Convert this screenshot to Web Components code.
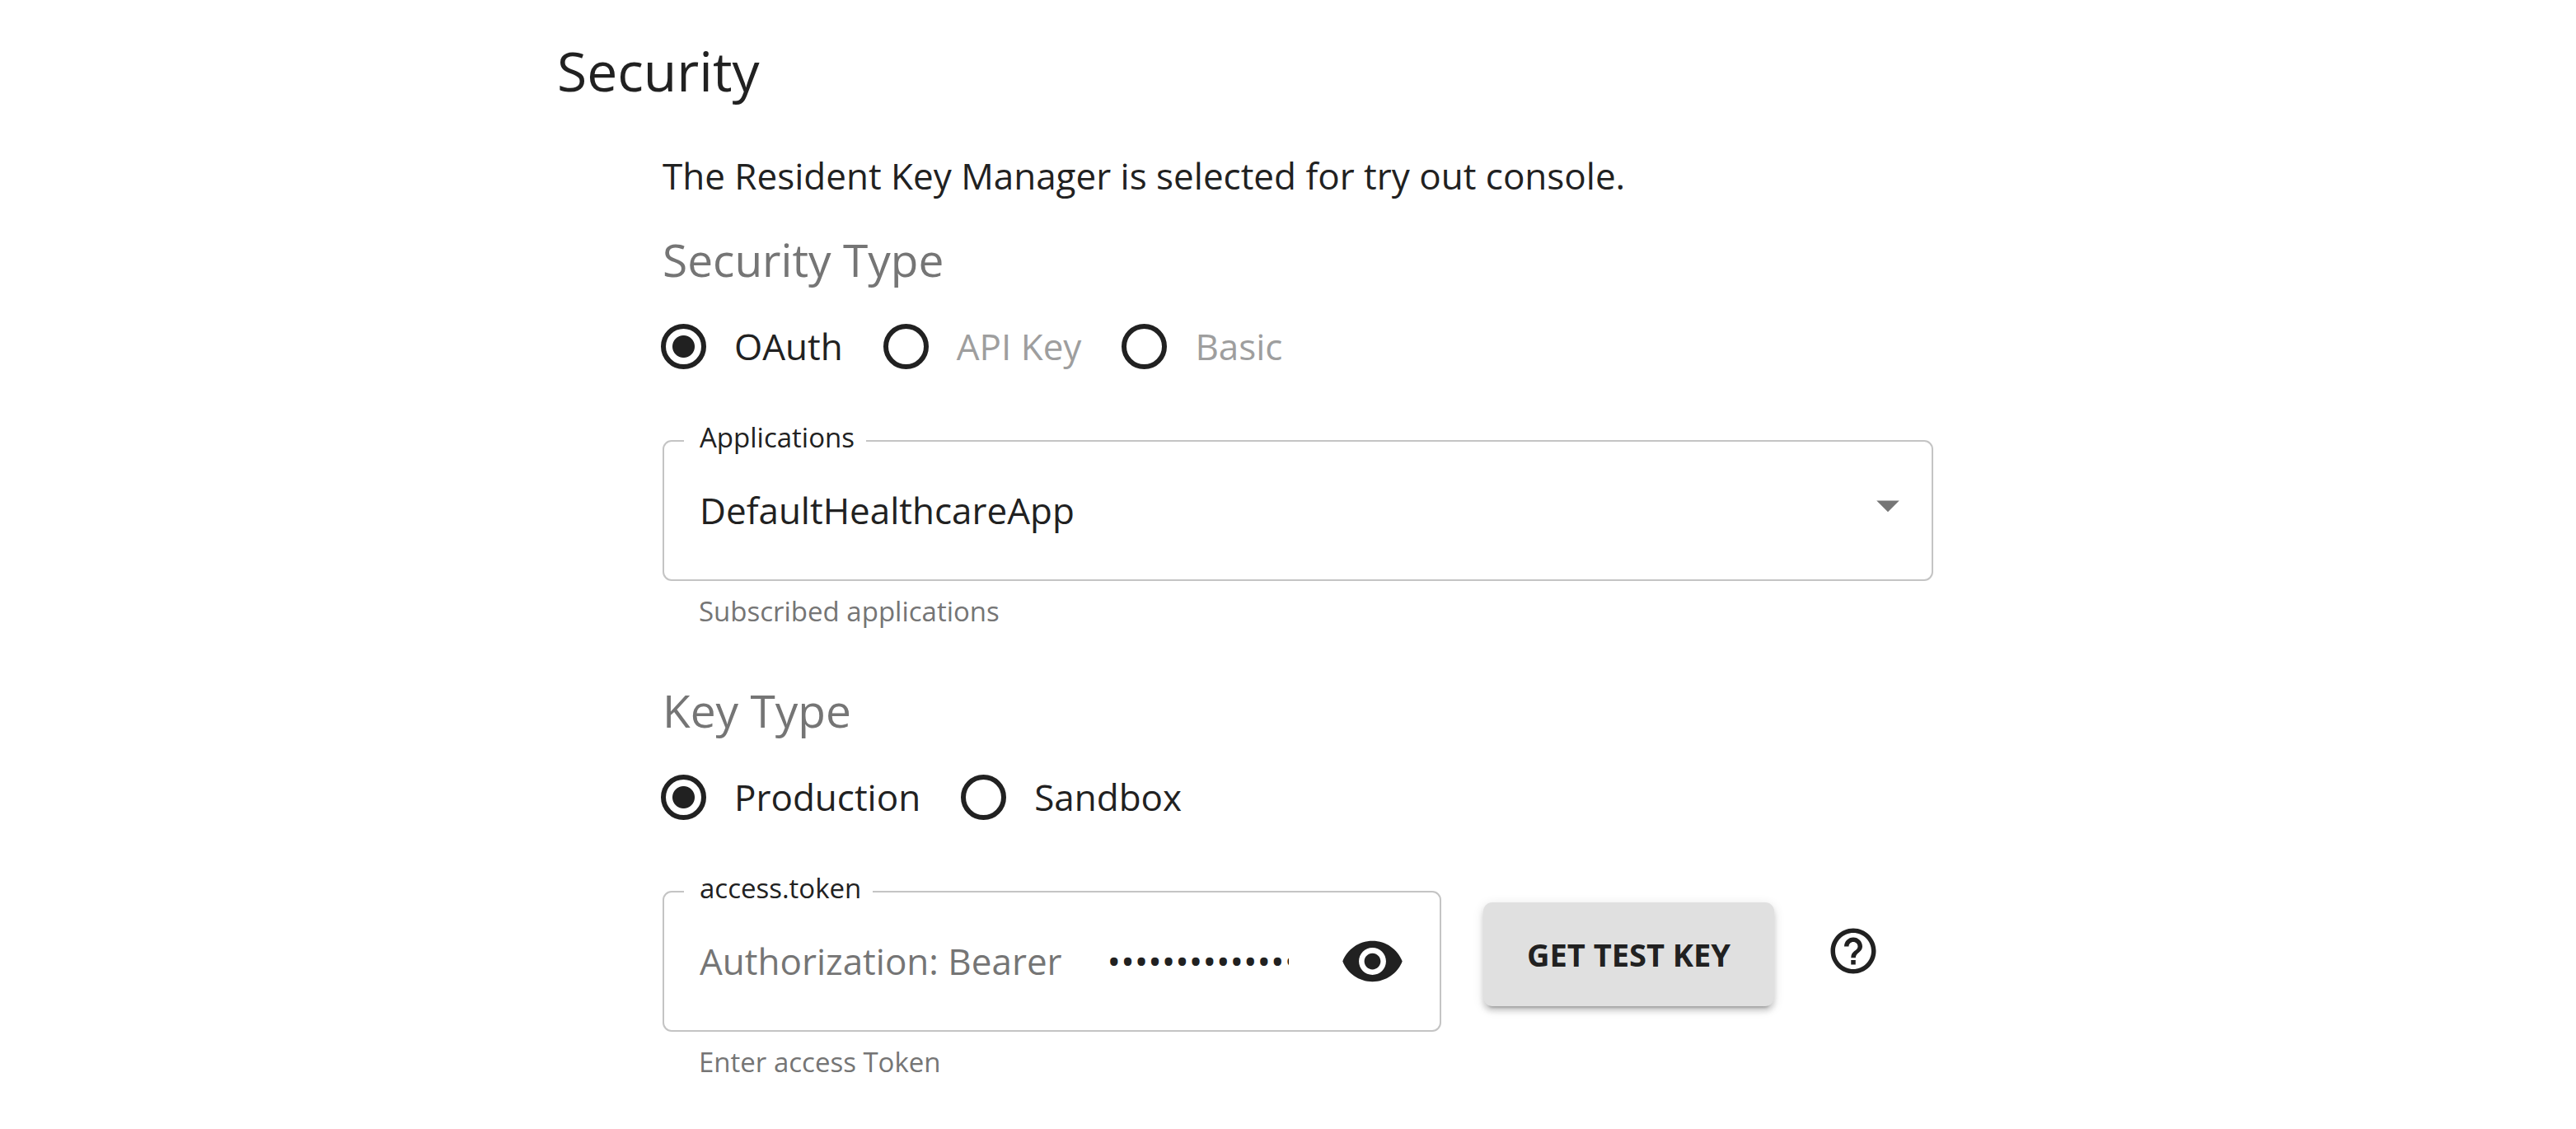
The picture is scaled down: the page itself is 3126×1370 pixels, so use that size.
<!DOCTYPE html>
<html lang="en">
<head>
<meta charset="utf-8">
<meta name="viewport" content="width=device-width, initial-scale=1">
<title>Security</title>
<style>
	body {
		margin: 0;
		background: #fff;
		color: #212121;
		font-family: "Open Sans", "Noto Sans", sans-serif;
		font-size: 44px;
		line-height: 66px;
		--muted: #757575;
		--outline: #c4c4c4;
	}
</style>
</head>
<body>
<security-panel heading="Security">
	<p>The Resident Key Manager is selected for try out console.</p>
	<radio-set heading="Security Type">
		<radio-option name="security" value="OAuth" checked></radio-option>
		<radio-option name="security" value="API Key" disabled></radio-option>
		<radio-option name="security" value="Basic" disabled></radio-option>
	</radio-set>
	<select-field label="Applications" help="Subscribed applications" options="DefaultHealthcareApp"></select-field>
	<radio-set heading="Key Type">
		<radio-option name="key" value="Production" checked></radio-option>
		<radio-option name="key" value="Sandbox"></radio-option>
	</radio-set>
	<field-row>
		<token-field label="access.token" help="Enter access Token" prefix-text="Authorization: Bearer"></token-field>
		<raised-button>Get Test Key</raised-button>
		<help-button></help-button>
	</field-row>
</security-panel>

<script>
class SecurityPanel extends HTMLElement {
	constructor(){
		super();
		let shadowRoot = this.attachShadow({mode: 'open'});
		shadowRoot.innerHTML = `
				<style>
				:host {
					display: block;
					box-sizing: border-box;
					max-width: 1774px;
					margin: 0 auto;
					padding: 40px 0;
				}
				h1 {
					margin: 0 0 50px;
					font-size: 66px;
					line-height: 90px;
					font-weight: 400;
				}
				.content {
					padding: 0 104px 0 128px;
				}
				::slotted(p) {
					margin: 0 0 23px;
				}
				</style>
				<h1></h1>
				<div class="content"><slot></slot></div>
		`;
	}
	connectedCallback() {
		this.shadowRoot.querySelector('h1').textContent = this.getAttribute('heading');
	}
}

class RadioSet extends HTMLElement {
	constructor(){
		super();
		let shadowRoot = this.attachShadow({mode: 'open'});
		shadowRoot.innerHTML = `
				<style>
				:host {
					display: block;
				}
				h2 {
					margin: 0;
					color: var(--muted);
					font-size: 55px;
					line-height: 92px;
					font-weight: 400;
				}
				.options {
					display: flex;
					flex-wrap: wrap;
					gap: 0 49px;
					margin-left: -2px;
				}
				</style>
				<h2 id="heading"></h2>
				<div class="options" role="radiogroup" aria-labelledby="heading"><slot></slot></div>
		`;
		// each option has its own shadow root, so the browser does not group them
		this.addEventListener('option-picked', (e) => {
			this.querySelectorAll('radio-option').forEach((option) => {
				option.checked = option === e.target;
			});
		});
	}
	connectedCallback() {
		this.shadowRoot.querySelector('h2').textContent = this.getAttribute('heading');
	}
}

class RadioOption extends HTMLElement {
	constructor(){
		super();
		let shadowRoot = this.attachShadow({mode: 'open'});
		shadowRoot.innerHTML = `
				<style>
				:host {
					display: flex;
					align-items: center;
					height: 118px;
				}
				input {
					appearance: none;
					flex: none;
					box-sizing: border-box;
					width: 55px;
					height: 55px;
					margin: 0;
					border: 6px solid #212121;
					border-radius: 50%;
				}
				input:checked {
					background: radial-gradient(circle, #212121 13px, transparent 14px);
				}
				label {
					padding-left: 34px;
				}
				:host([disabled]) label {
					color: #9e9e9e;
				}
				</style>
				<input type="radio" id="radio">
				<label for="radio"></label>
		`;
		this.input = shadowRoot.querySelector('input');
		this.input.addEventListener('change', () => {
			this.dispatchEvent(new CustomEvent('option-picked', {bubbles: true}));
		});
	}
	connectedCallback() {
		this.input.name = this.getAttribute('name');
		this.input.value = this.getAttribute('value');
		this.input.checked = this.hasAttribute('checked');
		this.input.disabled = this.hasAttribute('disabled');
		this.shadowRoot.querySelector('label').textContent = this.getAttribute('value');
	}
	get checked(){
		return this.input.checked;
	}
	set checked(value){
		this.input.checked = value;
	}
}

// Outline, notched label and help line; subclasses supply the control itself.
class OutlinedField extends HTMLElement {
	constructor(){
		super();
		let shadowRoot = this.attachShadow({mode: 'open'});
		shadowRoot.innerHTML = `
				<style>
				:host {
					display: block;
					min-width: 0;
				}
				fieldset {
					box-sizing: border-box;
					min-width: 0;
					margin: 30px 0 0;
					padding: 0 42px 26px 43px;
					border: 2px solid var(--outline);
					border-radius: 11px;
				}
				legend {
					margin-left: -19px;
					padding: 0 14px 8px 19px;
					font-size: 33px;
					line-height: 44px;
				}
				.control {
					display: flex;
					align-items: center;
					height: 116px;
				}
				p {
					margin: 14px 0 0;
					padding-left: 44px;
					color: var(--muted);
					font-size: 33px;
					line-height: 46px;
				}
				svg {
					display: block;
					fill: currentColor;
				}
				</style>
				<fieldset>
					<legend><label for="control"></label></legend>
					<div class="control">${this.control()}</div>
				</fieldset>
				<p id="help"></p>
		`;
	}
	connectedCallback() {
		this.shadowRoot.querySelector('label').textContent = this.getAttribute('label');
		this.shadowRoot.querySelector('#help').textContent = this.getAttribute('help');
	}
	control() {
		return '';
	}
}

class SelectField extends OutlinedField {
	control() {
		return `
				<style>
				:host {
					margin-bottom: 51px;
				}
				.control {
					position: relative;
				}
				select {
					appearance: none;
					width: 100%;
					height: 100%;
					padding: 0;
					border: 0;
					background: none;
					color: inherit;
					font: inherit;
					outline: 0;
				}
				svg {
					position: absolute;
					right: -22px;
					top: 19px;
					width: 66px;
					height: 66px;
					color: var(--muted);
					pointer-events: none;
				}
				</style>
				<select id="control" aria-describedby="help"></select>
				<svg viewBox="0 0 24 24" aria-hidden="true"><path d="M7 10l5 5 5-5z"/></svg>
		`;
	}
	connectedCallback() {
		super.connectedCallback();
		let select = this.shadowRoot.querySelector('select');
		this.getAttribute('options').split(',').forEach((name) => {
			select.add(new Option(name));
		});
	}
}

class TokenField extends OutlinedField {
	control() {
		return `
				<style>
				:host {
					flex: 1;
				}
				.prefix {
					flex: none;
					color: var(--muted);
				}
				input {
					flex: 1;
					min-width: 0;
					height: 66px;
					margin: 0 62px 0 55px;
					padding: 0;
					border: 0;
					background: none;
					color: inherit;
					font: inherit;
					outline: 0;
				}
				button {
					flex: none;
					padding: 0;
					border: 0;
					background: none;
					color: inherit;
					cursor: pointer;
				}
				svg {
					width: 79px;
					height: 79px;
				}
				</style>
				<span class="prefix"></span>
				<input type="password" id="control" value="eyJ4NXQiOiJNell4TW1Ga09HWXdNV0k0WldObU5" aria-describedby="help">
				<button type="button" aria-label="Show token">
					<svg viewBox="0 0 24 24" aria-hidden="true"><path d="M12 4.5C7 4.5 2.73 7.61 1 12c1.73 4.39 6 7.5 11 7.5s9.27-3.11 11-7.5c-1.73-4.39-6-7.5-11-7.5zM12 17c-2.76 0-5-2.24-5-5s2.24-5 5-5 5 2.24 5 5-2.24 5-5 5zm0-8c-1.66 0-3 1.34-3 3s1.34 3 3 3 3-1.34 3-3-1.34-3-3-3z"/></svg>
				</button>
		`;
	}
	connectedCallback() {
		super.connectedCallback();
		this.shadowRoot.querySelector('.prefix').textContent = this.getAttribute('prefix-text');
		this.shadowRoot.querySelector('button').addEventListener('click', () => {
			let input = this.shadowRoot.querySelector('input');
			input.type = input.type === 'password' ? 'text' : 'password';
		});
	}
}

class FieldRow extends HTMLElement {
	constructor(){
		super();
		let shadowRoot = this.attachShadow({mode: 'open'});
		shadowRoot.innerHTML = `
				<style>
				:host {
					display: flex;
					align-items: flex-start;
				}
				</style>
				<slot></slot>
		`;
	}
}

class RaisedButton extends HTMLElement {
	constructor(){
		super();
		let shadowRoot = this.attachShadow({mode: 'open'});
		shadowRoot.innerHTML = `
				<style>
				:host {
					flex: none;
					margin: 69px 0 0 51px;
				}
				button {
					display: block;
					padding: 30px 53px;
					border: 0;
					border-radius: 11px;
					background: #e0e0e0;
					box-shadow: 0 8px 3px -6px rgba(0, 0, 0, .2), 0 6px 6px rgba(0, 0, 0, .14), 0 3px 14px rgba(0, 0, 0, .12);
					color: inherit;
					font: inherit;
					font-size: 38px;
					font-weight: 700;
					line-height: 66px;
					text-transform: uppercase;
					cursor: pointer;
				}
				</style>
				<button type="button"><slot></slot></button>
		`;
	}
}

class HelpButton extends HTMLElement {
	constructor(){
		super();
		let shadowRoot = this.attachShadow({mode: 'open'});
		shadowRoot.innerHTML = `
				<style>
				:host {
					flex: none;
					margin: 62px 31px 0 30px;
				}
				button {
					display: block;
					padding: 33px;
					border: 0;
					border-radius: 50%;
					background: none;
					color: inherit;
					cursor: pointer;
				}
				svg {
					display: block;
					width: 66px;
					height: 66px;
					fill: currentColor;
				}
				</style>
				<button type="button" aria-label="Help">
					<svg viewBox="0 0 24 24" aria-hidden="true"><path d="M11 18h2v-2h-2v2zm1-16C6.48 2 2 6.48 2 12s4.48 10 10 10 10-4.48 10-10S17.52 2 12 2zm0 18c-4.41 0-8-3.59-8-8s3.59-8 8-8 8 3.59 8 8-3.59 8-8 8zm0-14c-2.21 0-4 1.79-4 4h2c0-1.1.9-2 2-2s2 .9 2 2c0 2-3 1.75-3 5h2c0-2.25 3-2.5 3-5 0-2.21-1.79-4-4-4z"/></svg>
				</button>
		`;
	}
}

customElements.define('security-panel', SecurityPanel);
customElements.define('radio-set', RadioSet);
customElements.define('radio-option', RadioOption);
customElements.define('select-field', SelectField);
customElements.define('token-field', TokenField);
customElements.define('field-row', FieldRow);
customElements.define('raised-button', RaisedButton);
customElements.define('help-button', HelpButton);
</script>
</body>
</html>
